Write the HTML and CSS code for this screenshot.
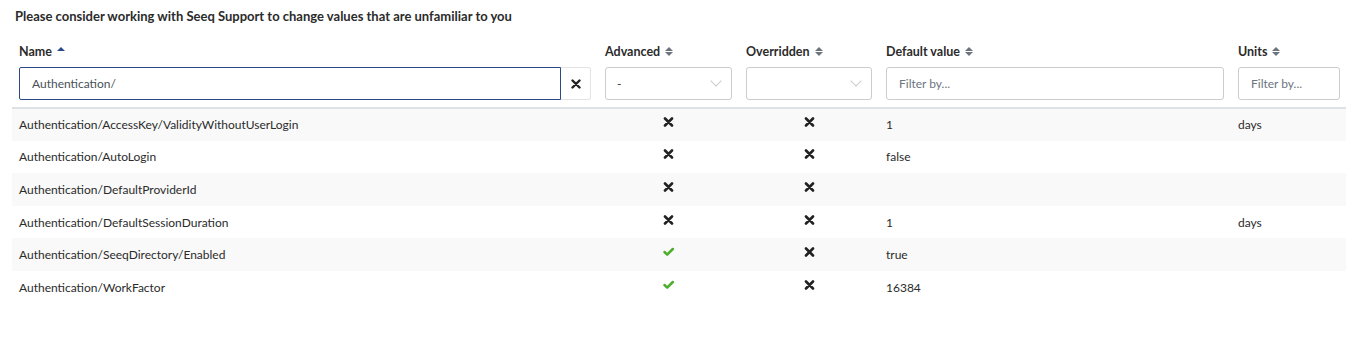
FILE: index.html
```html
<!DOCTYPE html>
<html lang="en">
<head>
    <meta charset="UTF-8">
    <title>Configuration</title>
    <link rel="stylesheet" href="styles.css">
</head>
<body>
    <div class="page">
        <div class="notice">Please consider working with Seeq Support to change values that are unfamiliar to you</div>

        <table class="config-table">
            <colgroup>
                <col class="col-name">
                <col class="col-adv">
                <col class="col-over">
                <col class="col-default">
                <col class="col-units">
            </colgroup>
            <thead>
                <tr class="head-labels">
                    <th>Name <span class="sort sort-up"></span></th>
                    <th>Advanced <span class="sort"></span></th>
                    <th>Overridden <span class="sort"></span></th>
                    <th>Default value <span class="sort"></span></th>
                    <th>Units <span class="sort"></span></th>
                </tr>
                <tr class="head-filters">
                    <th>
                        <div class="filter-group">
                            <div class="text-filter active">Authentication/</div>
                            <div class="clear-btn">
                                <svg width="10" height="10" viewBox="0 0 10 10"><path d="M1.5 1.5 L8.5 8.5 M8.5 1.5 L1.5 8.5" stroke="#222" stroke-width="2.4" stroke-linecap="round"/></svg>
                            </div>
                        </div>
                    </th>
                    <th><div class="select-filter"><span>-</span><span class="chevron"></span></div></th>
                    <th><div class="select-filter"><span></span><span class="chevron"></span></div></th>
                    <th><div class="text-filter placeholder">Filter by...</div></th>
                    <th><div class="text-filter placeholder">Filter by...</div></th>
                </tr>
            </thead>
            <tbody>
                <tr>
                    <td>Authentication/AccessKey/ValidityWithoutUserLogin</td>
                    <td class="icon"><span class="no"></span></td>
                    <td class="icon"><span class="no"></span></td>
                    <td>1</td>
                    <td>days</td>
                </tr>
                <tr>
                    <td>Authentication/AutoLogin</td>
                    <td class="icon"><span class="no"></span></td>
                    <td class="icon"><span class="no"></span></td>
                    <td>false</td>
                    <td></td>
                </tr>
                <tr>
                    <td>Authentication/DefaultProviderId</td>
                    <td class="icon"><span class="no"></span></td>
                    <td class="icon"><span class="no"></span></td>
                    <td></td>
                    <td></td>
                </tr>
                <tr>
                    <td>Authentication/DefaultSessionDuration</td>
                    <td class="icon"><span class="no"></span></td>
                    <td class="icon"><span class="no"></span></td>
                    <td>1</td>
                    <td>days</td>
                </tr>
                <tr>
                    <td>Authentication/SeeqDirectory/Enabled</td>
                    <td class="icon"><span class="yes"></span></td>
                    <td class="icon"><span class="no"></span></td>
                    <td>true</td>
                    <td></td>
                </tr>
                <tr>
                    <td>Authentication/WorkFactor</td>
                    <td class="icon"><span class="yes"></span></td>
                    <td class="icon"><span class="no"></span></td>
                    <td>16384</td>
                    <td></td>
                </tr>
            </tbody>
        </table>
    </div>
</body>
</html>
```

FILE: styles.css
```css
body {
    margin: 0;
    font-family: Lato, "Liberation Sans", sans-serif;
    font-size: 12px;
    color: #2b2b2b;
    background-color: white;
}

.page {
    padding: 8px 0 0 12px;
}

.notice {
    font-weight: bold;
    font-size: 13px;
    padding-left: 3px;
    height: 16px;
    line-height: 16px;
}

.config-table {
    width: 1335px;
    margin-top: 18px;
    border-collapse: collapse;
    table-layout: fixed;
}

.col-name { width: 586px; }
.col-adv { width: 141px; }
.col-over { width: 140px; }
.col-default { width: 352px; }
.col-units { width: 116px; }

th {
    text-align: left;
    font-weight: bold;
    font-size: 12.5px;
    padding: 0 7px;
}

.head-labels th {
    height: 18px;
    vertical-align: middle;
    padding-bottom: 5px;
}

.head-filters th {
    padding-top: 2px;
    padding-bottom: 7px;
    border-bottom: 2px solid #dee2e6;
    font-weight: normal;
}

.sort {
    display: inline-block;
    width: 8px;
    height: 10px;
    margin-left: 2px;
    vertical-align: -1px;
    position: relative;
}

.sort::before,
.sort::after {
    content: "";
    position: absolute;
    left: 0;
    border-left: 4px solid transparent;
    border-right: 4px solid transparent;
}

.sort::before {
    top: 0;
    border-bottom: 4px solid #6c757d;
}

.sort::after {
    top: 5px;
    border-top: 4px solid #6c757d;
}

.sort-up::before {
    border-bottom-color: #2a4a8a;
}

.sort-up::after {
    display: none;
}

.filter-group {
    display: flex;
}

.text-filter,
.select-filter {
    box-sizing: border-box;
    height: 33px;
    border: 1px solid #ccc;
    border-radius: 3px;
    padding: 0 12px;
    display: flex;
    align-items: center;
    font-size: 12px;
}

.filter-group .text-filter {
    flex: 1;
    border-radius: 2px 0 0 2px;
}

.text-filter.active {
    border-color: #2a4a8a;
    color: #495057;
}

.placeholder {
    color: #6c757d;
}

.clear-btn {
    width: 30px;
    height: 33px;
    box-sizing: border-box;
    border: 1px solid #e3e3e3;
    border-left: none;
    border-radius: 0 3px 3px 0;
    display: flex;
    align-items: center;
    justify-content: center;
}

.select-filter {
    justify-content: space-between;
    padding: 0 11px 0 11px;
    color: #333;
}

.chevron {
    width: 7px;
    height: 7px;
    border-right: 1.5px solid #ccc;
    border-bottom: 1.5px solid #ccc;
    transform: rotate(45deg);
    margin-top: -5px;
}

td {
    height: 32.6px;
    padding: 0 7px;
    vertical-align: middle;
    box-sizing: border-box;
}

tbody tr:nth-child(odd) {
    background-color: #f9f9f9;
}

td.icon {
    text-align: center;
}

.no,
.yes {
    display: inline-block;
    width: 11px;
    height: 10px;
    vertical-align: 2px;
    background-repeat: no-repeat;
}

.no {
    background-image: url("data:image/svg+xml;utf8,<svg xmlns='http://www.w3.org/2000/svg' width='11' height='10' viewBox='0 0 11 10'><path d='M2 1.5 L9 8.5 M9 1.5 L2 8.5' stroke='%23222' stroke-width='2.6' stroke-linecap='round'/></svg>");
}

.yes {
    background-image: url("data:image/svg+xml;utf8,<svg xmlns='http://www.w3.org/2000/svg' width='11' height='10' viewBox='0 0 11 10'><path d='M1.5 5 L4.2 7.6 L9.8 2' fill='none' stroke='%234cae2b' stroke-width='2.5' stroke-linecap='round' stroke-linejoin='round'/></svg>");
}
```
